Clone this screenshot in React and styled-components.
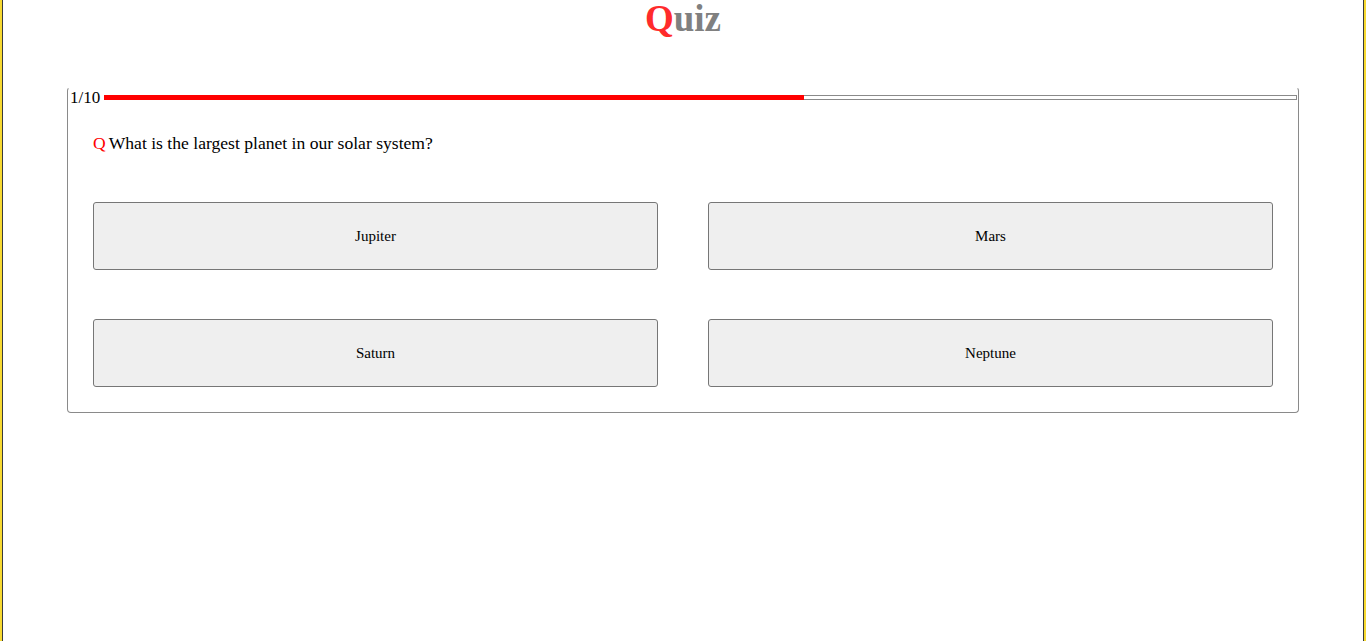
import React from 'react';
import styled, { createGlobalStyle } from 'styled-components';

const GlobalStyle = createGlobalStyle`
  html, body {
    margin: 0;
    padding: 0;
    background: #fff;
  }
  body {
    font-family: "Liberation Serif", "DejaVu Serif", serif;
    color: #000;
  }
`;

const Page = styled.div`
  min-height: 100vh;
  box-sizing: border-box;
  border-left: 2px solid #f7d931;
  border-right: 2px solid #f7d931;
  box-shadow: inset 1px 0 0 #3a3a3a, inset -1px 0 0 #3a3a3a;
  padding: 0 1px;
`;

const Title = styled.h1`
  margin: 0;
  height: 40px;
  line-height: 38px;
  font-size: 37px;
  font-weight: bold;
  text-align: center;
  color: #808080;
`;

const TitleMark = styled.span`
  color: #ff2b2b;
`;

const Card = styled.section`
  width: 1232px;
  box-sizing: border-box;
  margin: 47px auto 0;
  border: 1px solid #8a8a8a;
  border-top-color: transparent;
  border-radius: 4px;
`;

const ProgressRow = styled.div`
  display: flex;
  align-items: center;
  gap: 4px;
  height: 18px;
  padding: 0 1px 0 2px;
  font-size: 17px;
`;

const Count = styled.span`
  line-height: 18px;
  margin-top: 1px;
`;

const Track = styled.div`
  flex: 1;
  height: 3px;
  margin-top: 1px;
  border: 1px solid #8a8a8a;
  background: #fff;
  position: relative;
`;

const Fill = styled.div`
  position: absolute;
  left: -1px;
  top: -1px;
  bottom: -1px;
  background: #ff0000;
`;

const Question = styled.p`
  margin: 27px 25px 0;
  font-size: 17.6px;
  line-height: 20px;
`;

const QMark = styled.span`
  color: #ff0000;
  margin-right: 3px;
`;

const Answers = styled.div`
  display: grid;
  grid-template-columns: 565px 565px;
  column-gap: 50px;
  row-gap: 49px;
  padding: 49px 25px 25px;
`;

const AnswerButton = styled.button`
  height: 68px;
  box-sizing: border-box;
  border: 1px solid #767676;
  border-radius: 3px;
  background: #efefef;
  font-family: inherit;
  font-size: 15px;
  color: #000;
  cursor: pointer;

  &:hover {
    background: #e5e5e5;
  }
`;

const answers = ['Jupiter', 'Mars', 'Saturn', 'Neptune'];

export default function App() {
  const progress = 58.8;
  return (
    <Page>
      <GlobalStyle />
      <Title>
        <TitleMark>Q</TitleMark>uiz
      </Title>
      <Card>
        <ProgressRow>
          <Count>1/10</Count>
          <Track>
            <Fill style={{ width: `${progress}%` }} />
          </Track>
        </ProgressRow>
        <Question>
          <QMark>Q</QMark>What is the largest planet in our solar system?
        </Question>
        <Answers>
          {answers.map((a) => (
            <AnswerButton key={a}>{a}</AnswerButton>
          ))}
        </Answers>
      </Card>
    </Page>
  );
}
